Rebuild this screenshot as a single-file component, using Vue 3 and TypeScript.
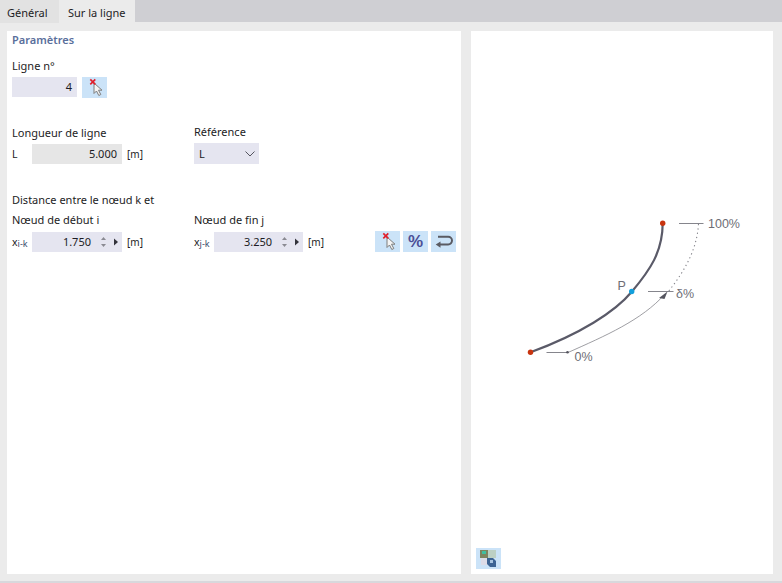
<script setup lang="ts">
const tabs = [
  { label: 'Général', active: false },
  { label: 'Sur la ligne', active: true },
]
</script>

<template>
  <div class="app">
    <div class="tabs">
      <div v-for="t in tabs" :key="t.label" class="tab" :class="{ active: t.active }">{{ t.label }}</div>
    </div>
    <div class="panels">
      <section class="left">
        <h2 class="title">Paramètres</h2>

        <div class="label l-line">Ligne n°</div>
        <div class="row top">
          <div class="input num-line">4</div>
          <button class="tool tool-first">
            <svg width="25" height="21" viewBox="0 0 25 21">
              <path d="M12 6v10.500l2.500-2.500 2.300 4.500 2-1-2.300-4.300h3.500z" fill="#f4f4f4" stroke="#7d7d7d" stroke-width="1" />
              <path d="M8.300 2.300l5 5M13.300 2.300l-5 5" stroke="#e0202c" stroke-width="1.700" />
            </svg>
          </button>
        </div>

        <div class="cols c-length">
          <div class="col">
            <div class="label">Longueur de ligne</div>
            <div class="row">
              <span class="sym">L</span>
              <div class="input grey">5.000</div>
              <span class="unit">[m]</span>
            </div>
          </div>
          <div class="col">
            <div class="label raised">Référence</div>
            <div class="row">
              <div class="select">
                <span>L</span>
                <svg width="10" height="6" viewBox="0 0 10 6"><path d="M.5.5L5 5 9.500.5" fill="none" stroke="#55555f" /></svg>
              </div>
            </div>
          </div>
        </div>

        <div class="label l-dist">Distance entre le nœud k et</div>
        <div class="cols c-dist">
          <div class="col">
            <div class="label">Nœud de début i</div>
            <div class="row">
              <span class="sym">x<sub>i-k</sub></span>
              <div class="input spin">
                <span class="val">1.750</span>
                <svg class="spinner" width="22" height="14" viewBox="0 0 22 14">
                  <path d="M3 5l2.500-3L8 5z" fill="#8a8a92" />
                  <path d="M3 9l2.500 3L8 9z" fill="#8a8a92" />
                  <path d="M16 3.500l4 3.500-4 3.500z" fill="#33333b" />
                </svg>
              </div>
              <span class="unit">[m]</span>
            </div>
          </div>
          <div class="col">
            <div class="label">Nœud de fin j</div>
            <div class="row">
              <span class="sym">x<sub>j-k</sub></span>
              <div class="input spin">
                <span class="val">3.250</span>
                <svg class="spinner" width="22" height="14" viewBox="0 0 22 14">
                  <path d="M3 5l2.500-3L8 5z" fill="#8a8a92" />
                  <path d="M3 9l2.500 3L8 9z" fill="#8a8a92" />
                  <path d="M16 3.500l4 3.500-4 3.500z" fill="#33333b" />
                </svg>
              </div>
              <span class="unit">[m]</span>
              <div class="actions">
                <button class="tool">
                  <svg width="25" height="21" viewBox="0 0 25 21">
                    <path d="M12 6v10.500l2.500-2.500 2.300 4.500 2-1-2.300-4.300h3.500z" fill="#f4f4f4" stroke="#7d7d7d" stroke-width="1" />
                    <path d="M8.300 2.300l5 5M13.300 2.300l-5 5" stroke="#e0202c" stroke-width="1.700" />
                  </svg>
                </button>
                <button class="tool percent">%</button>
                <button class="tool">
                  <svg width="25" height="21" viewBox="0 0 25 21">
                    <path d="M7 5.800h10.200a3.800 3.800 0 0 1 0 7.600H7" fill="none" stroke="#5a5b63" stroke-width="2" />
                    <path d="M9.500 10.500L4.700 13.500l4.800 3.200z" fill="#5a5b63" />
                  </svg>
                </button>
              </div>
            </div>
          </div>
        </div>
      </section>

      <section class="right">
        <svg class="diagram" width="302" height="543" viewBox="471 31 302 543">
          <g fill="none" stroke="#85858c" stroke-width="1">
            <path d="M679 223.500h24.500M648 291.500h25.500M546.500 352.500H568" />
            <path d="M698.500 224C697 250 684 272 668 292" stroke-dasharray="1.300 3" stroke-width="1.100" />
            <path d="M568 352.500C605 336 642 320 665 294" stroke-width=".8" />
          </g>
          <path d="M659 298l8.500-6.500-3 7.500z" fill="#55555f" />
          <circle cx="567.500" cy="352.300" r="1.300" fill="#55555f" />
          <path d="M530.500 352.300C580 334 615 312 632 291.500C650 270 662.500 252 662.700 223.500" fill="none" stroke="#5a5a68" stroke-width="2.200" />
          <circle cx="530.500" cy="352.300" r="2.700" fill="#c8340f" />
          <circle cx="662.700" cy="223.300" r="2.700" fill="#c8340f" />
          <circle cx="631.700" cy="291.500" r="2.700" fill="#129fdc" />
          <g class="dia-text">
            <text x="617.500" y="289.500">P</text>
            <text x="708" y="228">100%</text>
            <text x="676" y="298">δ%</text>
            <text x="574.500" y="361">0%</text>
          </g>
        </svg>
        <button class="tool view">
          <svg width="25" height="21" viewBox="0 0 25 21">
            <rect x="4" y="2" width="8" height="8" fill="#7d8460" />
            <rect x="6" y="3" width="4" height="3" fill="#3fc0a0" />
            <rect x="12" y="2" width="8" height="8" fill="#bcd0c4" />
            <rect x="5" y="10" width="7" height="7" fill="#dcdce8" />
            <path d="M11 10h6l3 3v6h-6l-3-3z" fill="#3d6494" />
            <rect x="14" y="12" width="3" height="3" fill="#a8c4e0" />
          </svg>
        </button>
      </section>
    </div>
  </div>
</template>

<style>
html, body { margin: 0; padding: 0; }
</style>

<style scoped>
.app {
  width: 782px;
  height: 583px;
  background: #ebebeb;
  display: flex;
  flex-direction: column;
  font-family: "Noto Sans", "Open Sans", sans-serif;
  font-size: 11px;
  color: #1c1c24;
  overflow: hidden;
  border-bottom: 2px solid #d8d8dc;
  box-sizing: border-box;
}
.tabs {
  height: 22px;
  flex: none;
  display: flex;
  background: #cfcfd3;
}
.tab {
  box-sizing: border-box;
  width: 59px;
  padding-left: 7px;
  line-height: 26px;
  height: 23px;
  background: #e2e2e2;
}
.tab.active {
  width: 76px;
  background: #ebebeb;
  padding-left: 9px;
}
.panels {
  flex: 1;
  display: flex;
  gap: 10px;
  padding: 9px 9px 7px 7px;
  min-height: 0;
}
.left, .right {
  background: #fff;
  box-sizing: border-box;
}
.left {
  width: 454px;
  padding: 0 5px;
}
.right {
  width: 302px;
  position: relative;
}
.title {
  margin: 0;
  font-size: 11px;
  font-weight: 600;
  line-height: 18px;
  color: #5a6f9c;
}
.label {
  line-height: 16px;
  height: 16px;
}
.raised { position: relative; top: -1px; }
.l-line { margin-top: 9px; margin-bottom: 3px; }
.row {
  display: flex;
  align-items: flex-end;
  height: 21px;
}
.row.top { align-items: flex-start; }
.input {
  box-sizing: border-box;
  height: 20px;
  background: #e5e5f0;
  text-align: right;
  line-height: 20px;
  padding-right: 5px;
}
.num-line { width: 65px; }
.grey {
  width: 90px;
  background: #e6e6e6;
}
.spin {
  width: 90px;
  display: flex;
  align-items: center;
  justify-content: flex-end;
  padding-right: 2px;
}
.spinner { margin-left: 7px; }
.sym {
  width: 20px;
  font-size: 10.500px;
  line-height: 20px;
}
.sym sub {
  font-size: 9px;
  vertical-align: -1px;
  line-height: 0;
  color: #3b4a6b;
}
.unit {
  margin-left: 5px;
  font-size: 10px;
  line-height: 20px;
}
.tool {
  width: 25px;
  height: 21px;
  padding: 0;
  border: none;
  background: #cbe3f8;
  display: flex;
  align-items: center;
  justify-content: center;
}
.tool-first { margin-left: 5px; }
.percent {
  font-family: "Liberation Sans", sans-serif;
  font-size: 17px;
  font-weight: 700;
  color: #4b4f96;
  line-height: 21px;
}
.cols {
  display: flex;
}
.col { width: 182px; flex: none; }
.col:last-child { width: 262px; }
.c-length { margin-top: 27px; }
.c-length .label { margin-bottom: 2px; }
.select {
  box-sizing: border-box;
  width: 65px;
  height: 21px;
  background: #e5e5f0;
  display: flex;
  align-items: center;
  justify-content: space-between;
  padding: 0 4px 0 5px;
}
.l-dist { margin-top: 28px; margin-bottom: 4px; }
.c-dist .label { margin-bottom: 3px; }
.actions {
  display: flex;
  gap: 3px;
  margin-left: 51px;
}
.diagram {
  display: block;
  position: absolute;
  inset: 0;
}
.dia-text text {
  font-family: "Liberation Sans", sans-serif;
  font-size: 12.500px;
  fill: #6d6d75;
}
.view {
  position: absolute;
  left: 5px;
  bottom: 5px;
}
</style>
